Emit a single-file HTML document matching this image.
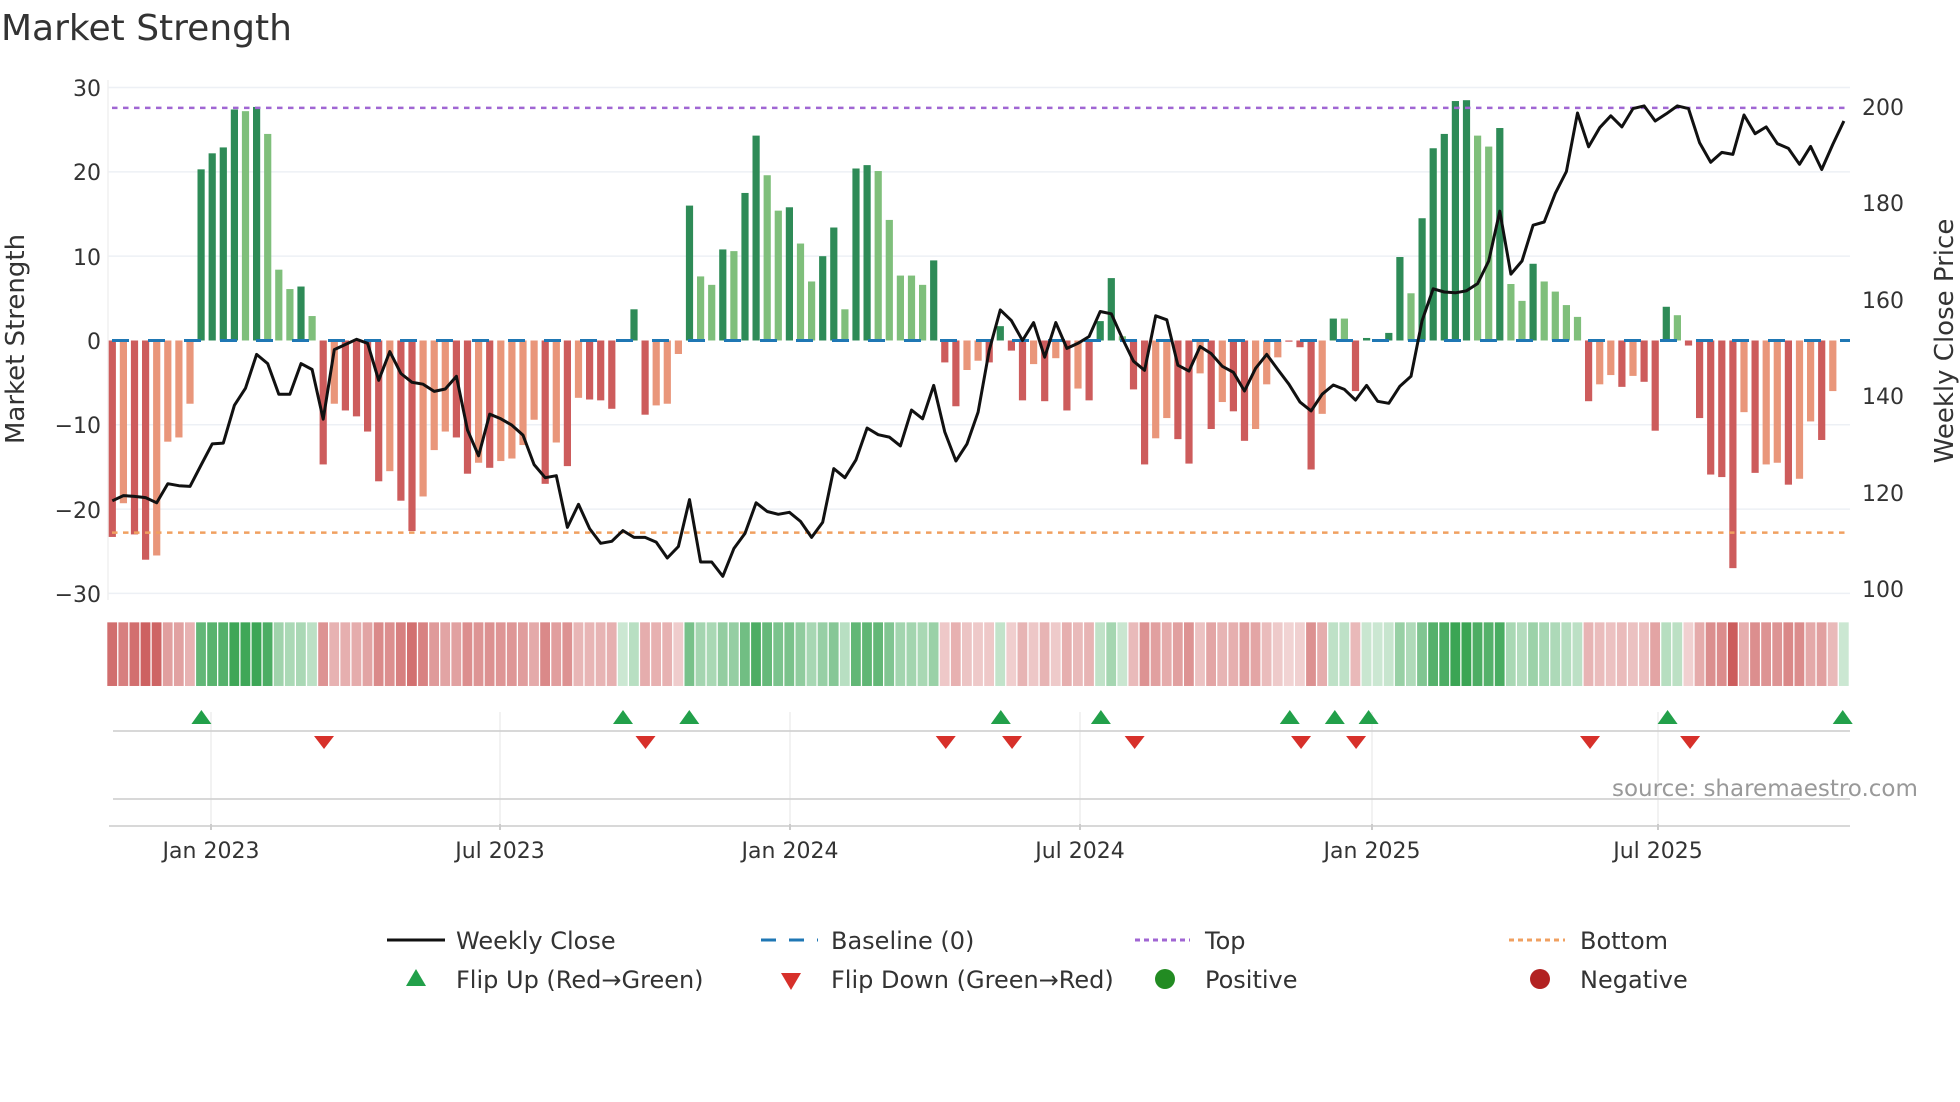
<!DOCTYPE html>
<html><head><meta charset="utf-8"><style>
html,body{margin:0;padding:0;background:#fff;}
svg{display:block;font-family:"DejaVu Sans","Liberation Sans",sans-serif;}
</style></head><body>
<svg id="s" width="1960" height="1102" viewBox="0 0 1960 1102" xmlns="http://www.w3.org/2000/svg">
<rect width="1960" height="1102" fill="#fff"/>
<text x="1" y="40" font-size="36" fill="#333">Market Strength</text>
<g id="grid" stroke="#edf0f5" stroke-width="1.5"></g>
<line x1="108" y1="80" x2="108" y2="600" stroke="#f0f0f0" stroke-width="1.5"/>
<g id="bars"></g>
<g id="strip"></g>
<g id="ref"></g>
<polyline id="price" fill="none" stroke="#111" stroke-width="3" stroke-linejoin="round"/>
<g font-size="22" fill="#333" text-anchor="end">
<text x="101" y="96">30</text><text x="101" y="180">20</text><text x="101" y="265">10</text><text x="101" y="349">0</text><text x="101" y="433">−10</text><text x="101" y="518">−20</text><text x="101" y="602">−30</text>
</g>
<g font-size="22" fill="#333">
<text x="1862" y="115">200</text><text x="1862" y="211">180</text><text x="1862" y="308">160</text><text x="1862" y="404">140</text><text x="1862" y="501">120</text><text x="1862" y="597">100</text>
</g>
<text transform="translate(24,339) rotate(-90)" font-size="26" fill="#333" text-anchor="middle">Market Strength</text>
<text transform="translate(1953,341) rotate(-90)" font-size="26" fill="#333" text-anchor="middle">Weekly Close Price</text>
<g id="lower"></g>
<text x="1612" y="796" font-size="23" fill="#999">source: sharemaestro.com</text>
<g font-size="22" fill="#333" text-anchor="middle">
<text x="211" y="858">Jan 2023</text><text x="500" y="858">Jul 2023</text><text x="790" y="858">Jan 2024</text><text x="1080" y="858">Jul 2024</text><text x="1372" y="858">Jan 2025</text><text x="1658" y="858">Jul 2025</text>
</g>
<g font-size="24" fill="#333" transform="translate(-2,-4)">
<line x1="389" y1="944" x2="447" y2="944" stroke="#111" stroke-width="3"/>
<text x="458" y="953">Weekly Close</text>
<line x1="763" y1="944" x2="820" y2="944" stroke="#1f77b4" stroke-width="3" stroke-dasharray="15 13"/>
<text x="833" y="953">Baseline (0)</text>
<line x1="1137" y1="944" x2="1192" y2="944" stroke="#a066d3" stroke-width="3" stroke-dasharray="5 4"/>
<text x="1207" y="953">Top</text>
<line x1="1511" y1="944" x2="1567" y2="944" stroke="#f0a060" stroke-width="3" stroke-dasharray="5 4"/>
<text x="1582" y="953">Bottom</text>
<polygon points="408,990 428,990 418,973" fill="#22a04a"/>
<text x="458" y="992">Flip Up (Red→Green)</text>
<polygon points="783,977 803,977 793,994" fill="#d7302a"/>
<text x="833" y="992">Flip Down (Green→Red)</text>
<circle cx="1167" cy="983" r="10" fill="#228b22"/>
<text x="1207" y="992">Positive</text>
<circle cx="1542" cy="983" r="10" fill="#b22222"/>
<text x="1582" y="992">Negative</text>
</g>
</svg>
<script>
var NS="http://www.w3.org/2000/svg";
function el(p,t,a){var e=document.createElementNS(NS,t);for(var k in a)e.setAttribute(k,a[k]);p.appendChild(e);return e;}
var v="R-23.3 O-19.3 R-23 R-26 O-25.5 O-12 O-11.5 O-7.5 D20.3 D22.2 D22.9 D27.4 L27.2 D27.7 L24.5 L8.4 L6.1 D6.4 L2.9 R-14.7 O-7.5 R-8.3 R-9 R-10.8 R-16.7 O-15.5 R-19 R-22.6 O-18.5 O-13 O-10.8 R-11.5 R-15.8 O-14.5 R-15.1 O-14.3 O-14 O-12.4 O-9.4 R-17 O-12.1 R-14.9 O-6.8 R-7 R-7.1 R-8.1 D0.1 D3.7 R-8.8 O-7.7 O-7.5 O-1.6 D16 L7.6 L6.6 D10.8 L10.6 D17.5 D24.3 L19.6 L15.4 D15.8 L11.5 L7 D10 D13.4 L3.7 D20.4 D20.8 L20.1 L14.3 L7.7 L7.7 L6.6 D9.5 R-2.6 R-7.8 O-3.5 O-2.4 R-2.6 D1.7 R-1.2 R-7.1 O-2.8 R-7.2 O-2.1 R-8.3 O-5.7 R-7.1 D2.3 D7.4 L0.5 R-5.8 R-14.7 O-11.6 O-9.2 R-11.7 R-14.6 O-3.9 R-10.5 O-7.3 R-8.4 R-11.9 O-10.5 O-5.2 O-2 R-0.1 R-0.8 R-15.3 O-8.7 D2.6 L2.6 R-6 D0.3 D0.1 D0.9 D9.9 L5.6 D14.5 D22.8 D24.5 D28.4 D28.5 L24.3 L23 D25.2 L6.7 L4.7 D9.1 L7 L5.8 L4.2 L2.8 R-7.2 O-5.2 O-4.1 R-5.5 O-4.2 R-4.9 R-10.7 D4 L3 R-0.6 R-9.2 R-15.9 R-16.2 R-27 O-8.5 R-15.7 O-14.7 O-14.5 R-17.1 O-16.4 O-9.6 R-11.8 O-6".split(" ");
var P=[1058,1045,1047,1050,1063,1015,1020,1022,968,915,913,818,775,690,713,790,790,713,728,853,678,665,652,662,755,683,738,760,765,783,777,745,880,945,840,852,868,893,967,1000,
995,1125,1067,1128,1165,1160,1133,1150,1150,1162,1202,1173,1055,1212,1212,1248,1178,1140,1063,1085,1092,1087,1110,1150,1112,977,1000,955,875,892,898,920,830,852,768,885,958,915,835,680,
578,605,655,610,697,610,675,662,645,582,588,650,707,730,593,603,717,732,670,688,720,735,782,725,690,728,765,810,832,790,767,778,805,768,808,813,770,745,605,525,
533,535,530,512,455,330,488,455,365,357,285,230,83,168,120,90,118,72,65,103,85,65,72,158,207,182,187,88,135,118,160,172,212,167,225,162,103];
var C={D:"#2e8b57",L:"#7fbf7b",R:"#cd5c5c",O:"#e9967a"};
var K=0.3977;
var X0=112.3,DX=11.1,Z=80+655*K,U=21.2*K;
var g=document.getElementById("grid");
[-30,-20,-10,10,20,30].forEach(function(t){var y=Z-t*U;el(g,"line",{x1:108,x2:1850,y1:y,y2:y});});
var b=document.getElementById("bars"),st=document.getElementById("strip");
var sy=80+1370*K-2.5, sh=160*K;
v.forEach(function(s,i){var c=s[0],val=parseFloat(s.slice(1)),x=X0+DX*i;
 var y=Z-val*U,h=Math.abs(val*U);
 el(b,"rect",{x:x-3.6,y:Math.min(y,Z),width:7.2,height:Math.max(h,1.2),fill:C[c]});
 var a=Math.min(Math.abs(val)/28,1);
 var col=val>0?"rgba(48,160,75,"+(0.25+0.7*a)+")":"rgba(200,80,80,"+(0.25+0.7*a)+")";
 el(st,"rect",{x:x-5,y:sy,width:9.8,height:sh,fill:col});
});
el(st,"rect",{x:X0+DX*156-5,y:sy,width:9.8,height:sh,fill:"rgba(48,160,75,0.25)"});
var r=document.getElementById("ref");
el(r,"line",{x1:112,x2:1850,y1:Z,y2:Z,stroke:"#1f77b4","stroke-width":3,"stroke-dasharray":"17 19"});
el(r,"line",{x1:112,x2:1850,y1:80+70*K,y2:80+70*K,stroke:"#a066d3","stroke-width":2.5,"stroke-dasharray":"5.5 5.5"});
el(r,"line",{x1:112,x2:1850,y1:80+1138*K,y2:80+1138*K,stroke:"#f0a060","stroke-width":2.5,"stroke-dasharray":"5.5 5.5"});
var pts=P.map(function(z,i){return (X0+DX*i).toFixed(1)+","+(80+z*K).toFixed(1);}).join(" ");
document.getElementById("price").setAttribute("points",pts);
var lo=document.getElementById("lower");
[211,500,790,1080,1372,1658].forEach(function(x){el(lo,"line",{x1:x,x2:x,y1:712,y2:824,stroke:"#eee","stroke-width":1.5});el(lo,"line",{x1:x,x2:x,y1:824,y2:830,stroke:"#bbb","stroke-width":1.5});});
el(lo,"line",{x1:113,x2:1850,y1:731,y2:731,stroke:"#ccc","stroke-width":1.5});
el(lo,"line",{x1:113,x2:1850,y1:799,y2:799,stroke:"#ccc","stroke-width":1.5});
el(lo,"line",{x1:109,x2:1850,y1:826,y2:826,stroke:"#ccc","stroke-width":1.5});
var S=1.251;
[161,498,551,800,880,1031,1067,1094,1333,1473].forEach(function(d){var x=d*S;el(lo,"polygon",{points:(x-10)+",724 "+(x+10)+",724 "+x+",710",fill:"#22a04a"});});
[259,516,756,809,907,1040,1084,1271,1351].forEach(function(d){var x=d*S;el(lo,"polygon",{points:(x-10)+",736 "+(x+10)+",736 "+x+",749",fill:"#d7302a"});});
</script>
</body></html>
